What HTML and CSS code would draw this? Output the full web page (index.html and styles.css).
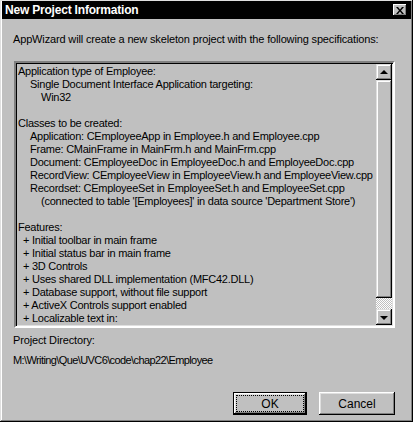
FILE: index.html
```html
<!DOCTYPE html>
<html>
<head>
<meta charset="utf-8">
<link rel="stylesheet" href="styles.css">
</head>
<body>
<div class="window">
  <div class="titlebar">
    <span class="title">New Project Information</span>
    <span class="close">
      <svg width="8" height="7" viewBox="0 0 8 7"><path d="M0 0h2l2 2.5L6 0h2L5 3.5 8 7H6L4 4.5 2 7H0l3-3.5z" fill="#000"/></svg>
    </span>
  </div>
  <div class="content">
    <p class="intro">AppWizard will create a new skeleton project with the following specifications:</p>
    <div class="listbox">
      <div class="list-text">
        <div>Application type of Employee:</div>
        <div class="i1">Single Document Interface Application targeting:</div>
        <div class="i2">Win32</div>
        <div class="blank"></div>
        <div>Classes to be created:</div>
        <div class="i1">Application: CEmployeeApp in Employee.h and Employee.cpp</div>
        <div class="i1">Frame: CMainFrame in MainFrm.h and MainFrm.cpp</div>
        <div class="i1">Document: CEmployeeDoc in EmployeeDoc.h and EmployeeDoc.cpp</div>
        <div class="i1">RecordView: CEmployeeView in EmployeeView.h and EmployeeView.cpp</div>
        <div class="i1">Recordset: CEmployeeSet in EmployeeSet.h and EmployeeSet.cpp</div>
        <div class="i2">(connected to table '[Employees]' in data source 'Department Store')</div>
        <div class="blank"></div>
        <div>Features:</div>
        <div class="ip">+ Initial toolbar in main frame</div>
        <div class="ip">+ Initial status bar in main frame</div>
        <div class="ip">+ 3D Controls</div>
        <div class="ip">+ Uses shared DLL implementation (MFC42.DLL)</div>
        <div class="ip">+ Database support, without file support</div>
        <div class="ip">+ ActiveX Controls support enabled</div>
        <div class="ip">+ Localizable text in:</div>
      </div>
      <div class="scrollbar">
        <div class="sbtn"><span class="arrow-up"></span></div>
        <div class="thumb"></div>
        <div class="track"></div>
        <div class="sbtn"><span class="arrow-down"></span></div>
      </div>
    </div>
    <p class="label">Project Directory:</p>
    <p class="path">M:\Writing\Que\UVC6\code\chap22\Employee</p>
    <div class="buttons">
      <button class="btn default"><span class="focus">OK</span></button>
      <button class="btn">Cancel</button>
    </div>
  </div>
</div>
</body>
</html>
```

FILE: styles.css
```css
html, body {
  margin: 0;
  padding: 0;
  background: #c0c0c0;
}
body {
  font-family: "Liberation Sans", Arial, sans-serif;
  font-size: 11px;
  letter-spacing: -0.15px;
  color: #000;
}
.window {
  width: 413px;
  height: 422px;
  box-sizing: border-box;
  background: #c0c0c0;
  padding: 1px 2px 2px 2px;
  box-shadow: inset -1px -1px #000, inset 1px 1px #dfdfdf, inset -2px -2px #808080, inset 2px 2px #fff;
}
.titlebar {
  height: 18px;
  background: #000;
  display: flex;
  align-items: center;
  justify-content: space-between;
  padding: 0 4px 0 3px;
}
.title {
  color: #fff;
  font-weight: bold;
  font-size: 12px;
  letter-spacing: -0.2px;
}
.close {
  width: 14px;
  height: 12px;
  box-sizing: border-box;
  background: #c0c0c0;
  display: flex;
  align-items: center;
  justify-content: center;
  box-shadow: inset -1px -1px #000, inset 1px 1px #fff, inset -2px -2px #808080;
}
.content {
  padding-left: 11px;
}
.content p {
  margin: 0;
  line-height: 13px;
}
.intro {
  padding-top: 14px;
}
.listbox {
  margin-top: 15px;
  margin-left: 1px;
  width: 381px;
  height: 267px;
  box-sizing: border-box;
  border: 2px solid;
  border-color: #808080 #fff #fff #808080;
  box-shadow: inset 1px 1px #000, inset -1px -1px #dfdfdf;
  display: flex;
}
.list-text {
  flex: 1;
  padding: 2px 0 0 2px;
  line-height: 13px;
  white-space: nowrap;
  overflow: hidden;
  letter-spacing: -0.25px;
}
.blank { height: 13px; }
.i1 { padding-left: 12px; }
.i2 { padding-left: 23px; }
.ip { padding-left: 5px; }
.scrollbar {
  width: 16px;
  margin: 1px 1px 1px 0;
  display: flex;
  flex-direction: column;
}
.sbtn, .thumb {
  background: #c0c0c0;
  box-shadow: inset -1px -1px #000, inset 1px 1px #dfdfdf, inset -2px -2px #808080, inset 2px 2px #fff;
}
.sbtn {
  height: 16px;
  display: flex;
  align-items: center;
  justify-content: center;
}
.thumb {
  flex: 1;
}
.track {
  height: 11px;
  background: repeating-conic-gradient(#fff 0 25%, #c0c0c0 0 50%) 0 0 / 2px 2px;
}
.arrow-up, .arrow-down {
  width: 0;
  height: 0;
  border-left: 4px solid transparent;
  border-right: 4px solid transparent;
}
.arrow-up {
  border-bottom: 4px solid #000;
  margin-top: -1px;
}
.arrow-down {
  border-top: 4px solid #000;
  margin-top: 1px;
}
.label {
  margin-top: 6px !important;
}
.path {
  margin-top: 7px !important;
  letter-spacing: -0.6px;
}
.buttons {
  width: 382px;
  margin-top: 25px;
  display: flex;
  justify-content: flex-end;
  gap: 12px;
}
.btn {
  width: 76px;
  height: 23px;
  padding: 0;
  font-family: "Liberation Sans", Arial, sans-serif;
  font-size: 12px;
  letter-spacing: 0;
  color: #000;
  background: #c0c0c0;
  border: none;
  box-shadow: inset -1px -1px #000, inset 1px 1px #fff, inset -2px -2px #808080, inset 2px 2px #dfdfdf;
  display: flex;
  align-items: center;
  justify-content: center;
}
.btn.default {
  width: 74px;
  border: 1px solid #000;
  padding: 3px;
}
.focus {
  flex: 1;
  align-self: stretch;
  display: flex;
  align-items: center;
  justify-content: center;
  outline: 1px dotted #000;
}
```
